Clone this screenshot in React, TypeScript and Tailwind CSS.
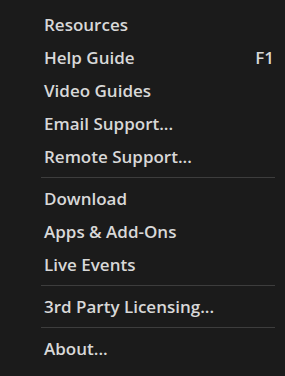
const groups: { label: string; shortcut?: string }[][] = [
  [
    { label: "Resources" },
    { label: "Help Guide", shortcut: "F1" },
    { label: "Video Guides" },
    { label: "Email Support..." },
    { label: "Remote Support..." },
  ],
  [{ label: "Download" }, { label: "Apps & Add-Ons" }, { label: "Live Events" }],
  [{ label: "3rd Party Licensing..." }],
  [{ label: "About..." }],
];

export default function App() {
  return (
    <div className="h-[376px] w-[285px] bg-[#1b1b1b] pt-2 font-['Open_Sans',sans-serif] text-[17px] font-semibold text-[#d8d8d8]">
      {groups.map((items, gi) => (
        <div key={gi}>
          {gi > 0 && <div className="my-1 ml-[41px] mr-[10px] h-px bg-[#3d3d3d]" />}
          {items.map((item) => (
            <div key={item.label} className="flex h-[33px] items-center justify-between pl-[44px] pr-[11px]">
              <span>{item.label}</span>
              {item.shortcut && <span>{item.shortcut}</span>}
            </div>
          ))}
        </div>
      ))}
    </div>
  );
}
